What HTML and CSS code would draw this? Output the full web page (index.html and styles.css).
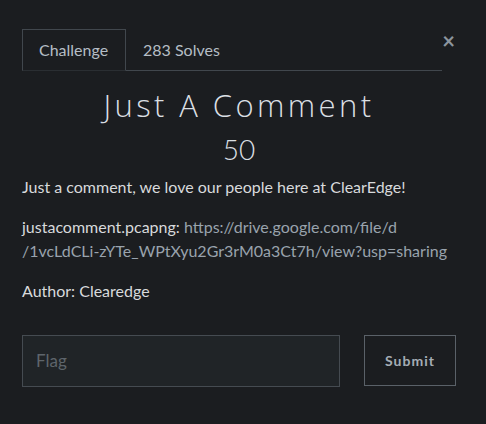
FILE: index.html
```html
<!DOCTYPE html>
<html>
<head>
<meta charset="utf-8">
<link rel="stylesheet" href="styles.css">
</head>
<body>
<div class="modal">
  <div class="tabs-row">
    <div class="tabs">
      <div class="tab active">Challenge</div>
      <div class="tab">283 Solves</div>
    </div>
    <div class="close">&times;</div>
  </div>
  <h2 class="title">Just A Comment</h2>
  <div class="value">50</div>
  <div class="desc">
    <p>Just a comment, we love our people here at ClearEdge!</p>
    <p>justacomment.pcapng: <a class="link">https://drive.google.com/file/d<br>/1vcLdCLi-zYTe_WPtXyu2Gr3rM0a3Ct7h/view?usp=sharing</a></p>
    <p>Author: Clearedge</p>
  </div>
  <div class="form">
    <div class="input">Flag</div>
    <div class="btn">Submit</div>
  </div>
</div>
</body>
</html>
```
FILE: styles.css
```css
html, body {
  margin: 0;
  background: #1b1d20;
}
body {
  font-family: Lato, "Open Sans", sans-serif;
  color: #d8dadc;
  width: 486px;
  height: 424px;
  overflow: hidden;
}
.modal {
  padding: 29px 30px 0 22px;
}
.tabs-row {
  display: flex;
  align-items: flex-start;
}
.tabs {
  display: flex;
  width: 420px;
  border-bottom: 1px solid #41474d;
  height: 41px;
}
.tab {
  font-size: 16px;
  color: #b5bdc5;
  padding: 0 17px;
  line-height: 41px;
  height: 41px;
}
.tab.active {
  border: 1px solid #41474d;
  border-bottom: 1px solid #2a2e32;
  padding: 0 16px;
  line-height: 40px;
  box-sizing: border-box;
  width: 104px;
  height: 42px;
}
.close {
  margin-left: auto;
  font-size: 22px;
  font-weight: 700;
  color: #8c959e;
  line-height: 26px;
  margin-top: -1px;
  margin-right: 1px;
}
.title {
  margin: 14px 0 0;
  text-align: center;
  font-family: "Open Sans", Lato, sans-serif;
  font-weight: 300;
  font-size: 31px;
  letter-spacing: 3.4px;
  line-height: 40px;
  color: #dadfe3;
}
.value {
  text-align: center;
  font-size: 28px;
  font-weight: 300;
  line-height: 34px;
  margin-top: 7px;
  color: #dadfe3;
}
.desc {
  margin-top: 9px;
  font-size: 16px;
  line-height: 24px;
}
.desc p {
  margin: 0 0 16px;
}
.desc p:last-child {
  margin-bottom: 0;
}
.link {
  color: #99a3ad;
}
.form {
  display: flex;
  justify-content: space-between;
  margin-top: 32px;
}
.input {
  width: 318px;
  height: 52px;
  box-sizing: border-box;
  background: #202427;
  border: 1px solid #454b51;
  color: #5e656b;
  font-size: 17px;
  padding-left: 13px;
  line-height: 50px;
}
.btn {
  width: 92px;
  height: 51px;
  box-sizing: border-box;
  border: 1px solid #5a6168;
  color: #a5adb5;
  font-size: 14px;
  font-weight: 700;
  letter-spacing: 1px;
  text-align: center;
  line-height: 49px;
}
```
